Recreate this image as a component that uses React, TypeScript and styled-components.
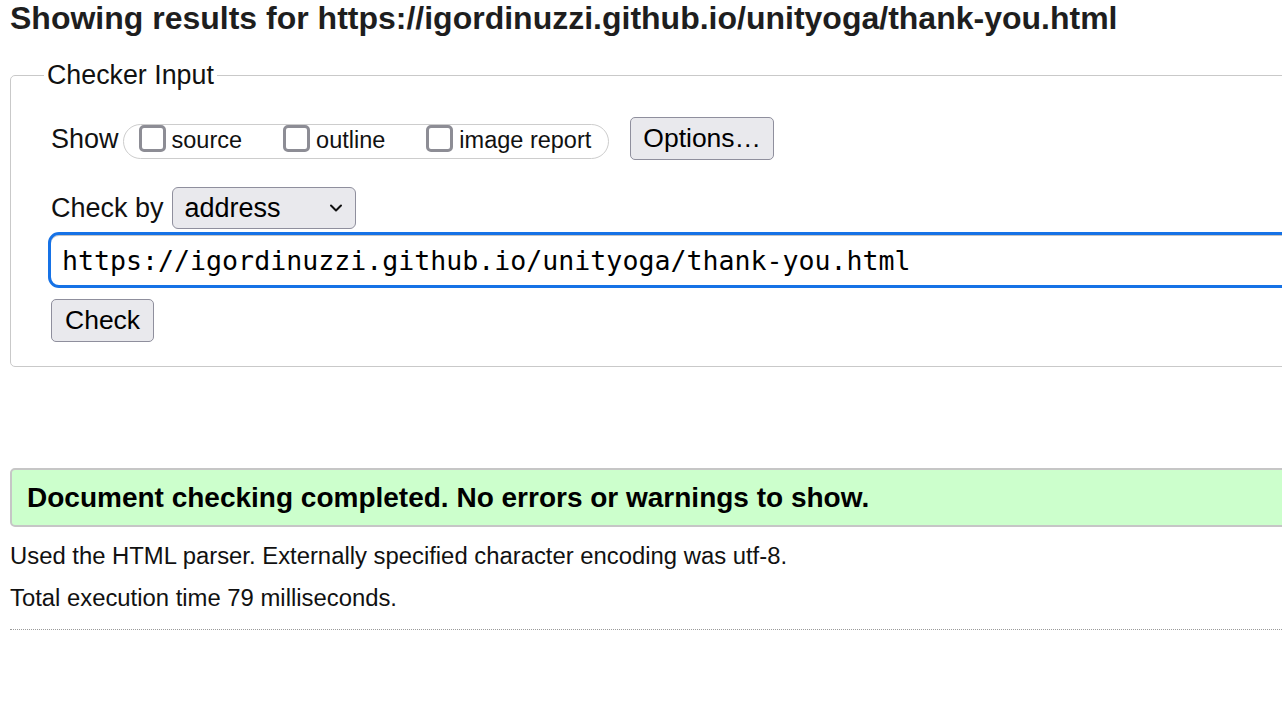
import React from "react";
import styled, { createGlobalStyle } from "styled-components";

const GlobalStyle = createGlobalStyle`
  html, body {
    margin: 0;
    padding: 0;
    background: #ffffff;
    overflow: hidden;
  }
  body {
    font-family: "Liberation Sans", Arial, Helvetica, sans-serif;
    color: #000;
  }
`;

const Page = styled.div`
  width: 1500px;
  padding-left: 10px;
  box-sizing: border-box;
`;

const Heading = styled.h2`
  margin: 0;
  font-size: 32px;
  line-height: 36px;
  font-weight: 700;
  color: #1e1e1e;
  white-space: nowrap;
`;

const Fieldset = styled.fieldset`
  margin: 24px 0 0 0;
  padding: 26px 0 24px 40px;
  border: 1.5px solid #c9c9c9;
  border-radius: 5px;
  min-width: 0;
`;

const Legend = styled.legend`
  font-size: 26.8px;
  line-height: 31px;
  padding: 0 3px;
  margin-left: -7px;
  color: #111;
`;

const Row = styled.div<{ $gap?: number; $mt?: number }>`
  display: flex;
  align-items: center;
  gap: ${(p) => p.$gap ?? 8}px;
  margin-top: ${(p) => p.$mt ?? 0}px;
`;

const Label = styled.span`
  font-size: 27px;
  line-height: 30px;
  color: #111;
`;

const Pill = styled.div`
  display: flex;
  align-items: flex-start;
  gap: 41px;
  height: 35px;
  box-sizing: border-box;
  padding: 0 17px 0 15px;
  border: 1.5px solid #cdcdcd;
  border-radius: 18px;
  margin-top: 6px;
`;

const Option = styled.label`
  display: flex;
  align-items: flex-start;
  gap: 6px;
`;

const Check = styled.input`
  appearance: none;
  -webkit-appearance: none;
  margin: 0;
  width: 27px;
  height: 27px;
  box-sizing: border-box;
  border: 3px solid #8d8d95;
  border-radius: 5px;
  background: #fff;
`;

const OptionText = styled.span`
  font-size: 23.5px;
  line-height: 27px;
  padding-top: 2px;
  color: #111;
`;

const Button = styled.button<{ $ml?: number; $px?: number }>`
  font-family: "Liberation Sans", Arial, sans-serif;
  font-size: 26.5px;
  height: 43px;
  padding: 0 ${(p) => p.$px ?? 13}px;
  margin-left: ${(p) => p.$ml ?? 0}px;
  background: #e9e9ed;
  border: 1.5px solid #8f8f9d;
  border-radius: 5px;
  color: #000;
  line-height: 1;
`;

const SelectBox = styled.div`
  display: flex;
  align-items: center;
  justify-content: space-between;
  width: 184px;
  height: 42px;
  box-sizing: border-box;
  padding: 0 12px 0 12px;
  background: #e9e9ed;
  border: 1.5px solid #8f8f9d;
  border-radius: 6px;
  font-size: 27px;
  color: #000;
`;

const UrlInput = styled.div`
  margin: 3px 0 0 -3px;
  height: 56px;
  box-sizing: border-box;
  border: 3.5px solid #1672e6;
  border-radius: 11px;
  box-shadow: inset 0 1px 0 #c4c4c4;
  padding-left: 11px;
  display: flex;
  align-items: center;
  font-family: "DejaVu Sans Mono", "Liberation Mono", monospace;
  font-size: 26.6px;
  color: #000;
  white-space: nowrap;
`;

const ButtonRow = styled.div`
  margin-top: 11px;
  display: flex;
`;

const Status = styled.div`
  margin-top: 101px;
  height: 59px;
  box-sizing: border-box;
  background: #ccffcc;
  border: 2px solid #c6c6c6;
  border-radius: 5px 0 0 5px;
  padding-left: 15px;
  display: flex;
  align-items: center;
  font-size: 28px;
  font-weight: 700;
  color: #000;
  white-space: nowrap;
`;

const Info = styled.p<{ $mt: number }>`
  margin: ${(p) => p.$mt}px 0 0 0;
  font-size: 23.85px;
  line-height: 30px;
  color: #111;
  white-space: nowrap;
`;

const Divider = styled.hr`
  margin: 16px 0 0 0;
  border: 0;
  border-top: 1.5px dotted #9a9a9a;
  height: 0;
`;

const Chevron = () => (
  <svg width="14" height="10" viewBox="0 0 14 10" aria-hidden="true">
    <path d="M2 2.5 L7 7.5 L12 2.5" fill="none" stroke="#111" strokeWidth="2" strokeLinecap="round" strokeLinejoin="round" />
  </svg>
);

export default function App() {
  return (
    <>
      <GlobalStyle />
      <Page>
        <Heading>Showing results for https://igordinuzzi.github.io/unityoga/thank-you.html</Heading>
        <Fieldset>
          <Legend>Checker Input</Legend>
          <Row $gap={4}>
            <Label>Show</Label>
            <Pill>
              <Option>
                <Check type="checkbox" />
                <OptionText>source</OptionText>
              </Option>
              <Option>
                <Check type="checkbox" />
                <OptionText>outline</OptionText>
              </Option>
              <Option>
                <Check type="checkbox" />
                <OptionText>image report</OptionText>
              </Option>
            </Pill>
            <Button $ml={17} $px={12}>Options…</Button>
          </Row>
          <Row $gap={8} $mt={27}>
            <Label>Check by</Label>
            <SelectBox>
              <span>address</span>
              <Chevron />
            </SelectBox>
          </Row>
          <UrlInput>https://igordinuzzi.github.io/unityoga/thank-you.html</UrlInput>
          <ButtonRow>
            <Button>Check</Button>
          </ButtonRow>
        </Fieldset>
        <Status>Document checking completed. No errors or warnings to show.</Status>
        <Info $mt={14}>Used the HTML parser. Externally specified character encoding was utf-8.</Info>
        <Info $mt={12}>Total execution time 79 milliseconds.</Info>
        <Divider />
      </Page>
    </>
  );
}
